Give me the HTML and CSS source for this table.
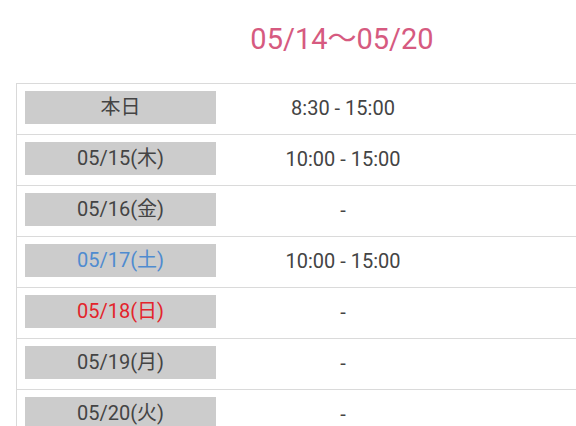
FILE: index.html
```html
<!DOCTYPE html>
<html lang="ja">
<head>
<meta charset="utf-8">
<link rel="stylesheet" href="styles.css">
</head>
<body>
<div class="page">
  <h1 class="title">05/14〜05/20</h1>
  <div class="schedule">
    <div class="row"><div class="day-cell"><span class="day">本日</span></div><div class="time">8:30 - 15:00</div><div class="rest"></div></div>
    <div class="row"><div class="day-cell"><span class="day">05/15(木)</span></div><div class="time">10:00 - 15:00</div><div class="rest"></div></div>
    <div class="row"><div class="day-cell"><span class="day">05/16(金)</span></div><div class="time">-</div><div class="rest"></div></div>
    <div class="row"><div class="day-cell"><span class="day sat">05/17(土)</span></div><div class="time">10:00 - 15:00</div><div class="rest"></div></div>
    <div class="row"><div class="day-cell"><span class="day sun">05/18(日)</span></div><div class="time">-</div><div class="rest"></div></div>
    <div class="row"><div class="day-cell"><span class="day">05/19(月)</span></div><div class="time">-</div><div class="rest"></div></div>
    <div class="row"><div class="day-cell"><span class="day">05/20(火)</span></div><div class="time">-</div><div class="rest"></div></div>
  </div>
</div>
</body>
</html>
```
FILE: styles.css
```css
html, body {
  margin: 0;
  padding: 0;
  overflow: hidden;
  background: #ffffff;
}
body {
  font-family: Roboto, "Noto Sans CJK JP", sans-serif;
  color: #444444;
}
.page {
  width: 576px;
}
.title {
  margin: 22px 0 26px;
  padding-left: 108px;
  font-size: 29px;
  line-height: 35px;
  font-weight: 400;
  text-align: center;
  color: #d65a80;
}
.schedule {
  margin-left: 16px;
  border-left: 1px solid #d9d9d9;
}
.row {
  display: grid;
  grid-template-columns: 208px 236px 1fr;
  border-top: 1px solid #dadada;
  height: 50px;
}
.day-cell {
  padding: 7px 0 9px 8px;
}
.day {
  display: block;
  width: 191px;
  height: 33px;
  line-height: 33px;
  background: #cccccc;
  text-align: center;
  font-size: 20px;
  color: #444444;
}
.day.sat {
  color: #4f8bd0;
}
.day.sun {
  color: #e3242b;
}
.time {
  text-align: center;
  font-size: 20px;
  line-height: 49px;
  color: #444444;
}
```
